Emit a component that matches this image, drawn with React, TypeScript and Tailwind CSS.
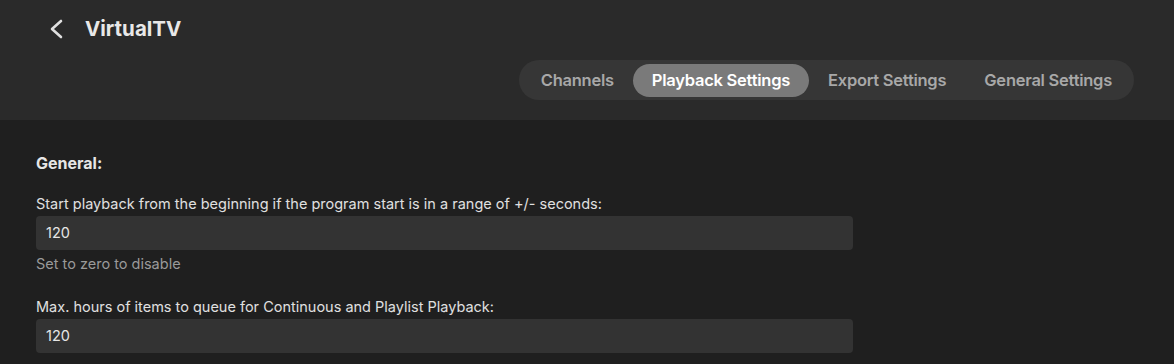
const tabs = ['Channels', 'Playback Settings', 'Export Settings', 'General Settings'];

function BackIcon() {
  return (
    <svg width="14" height="20" viewBox="0 0 14 20" fill="none" className="text-[#e0e0e0]">
      <path d="M12 2 L3 10 L12 18" stroke="currentColor" strokeWidth="2.6" strokeLinecap="round" strokeLinejoin="round" />
    </svg>
  );
}

export default function App() {
  const active = 'Playback Settings';

  return (
    <div className="h-[364px] w-[1174px] overflow-hidden bg-[#1f1f1f] font-['Inter',sans-serif] text-[#e6e6e6]">
      {/* header */}
      <header className="h-[120px] bg-[#2a2a2a] pt-[14px]">
        <div className="flex items-center pl-[49px]">
          <BackIcon />
          <h1 className="ml-[22px] text-[20.5px] font-bold leading-[30px] text-[#e8e8e8]">VirtualTV</h1>
        </div>
        <div className="mt-[16px] flex justify-end pr-[40px]">
          <nav className="flex h-[40px] items-center rounded-full bg-[#363636] px-[3px]">
            {tabs.map((t) => (
              <button
                key={t}
                className={`h-[33px] rounded-full px-[19px] text-[16.5px] font-semibold tracking-[-0.25px] ${
                  t === active ? 'bg-[#7a7a7a] text-white' : 'text-[#a8a8a8]'
                }`}
              >
                {t}
              </button>
            ))}
          </nav>
        </div>
      </header>

      {/* content */}
      <main className="px-[36px] pt-[33px]">
        <h2 className="text-[16px] font-bold leading-[20px] text-[#e6e6e6]">General:</h2>

        <div className="mt-[22px]">
          <label className="block text-[14.5px] leading-[18px] text-[#e0e0e0]">
            Start playback from the beginning if the program start is in a range of +/- seconds:
          </label>
          <div className="mt-[3px] flex h-[34px] w-[817px] items-center rounded-[4px] bg-[#333333] px-[10px] text-[14.5px] text-[#e6e6e6]">
            120
          </div>
          <p className="mt-[5px] text-[14.5px] leading-[17px] text-[#9a9a9a]">Set to zero to disable</p>
        </div>

        <div className="mt-[26px]">
          <label className="block text-[14.5px] leading-[18px] text-[#e0e0e0]">
            Max. hours of items to queue for Continuous and Playlist Playback:
          </label>
          <div className="mt-[3px] flex h-[34px] w-[817px] items-center rounded-[4px] bg-[#333333] px-[10px] text-[14.5px] text-[#e6e6e6]">
            120
          </div>
        </div>
      </main>
    </div>
  );
}
